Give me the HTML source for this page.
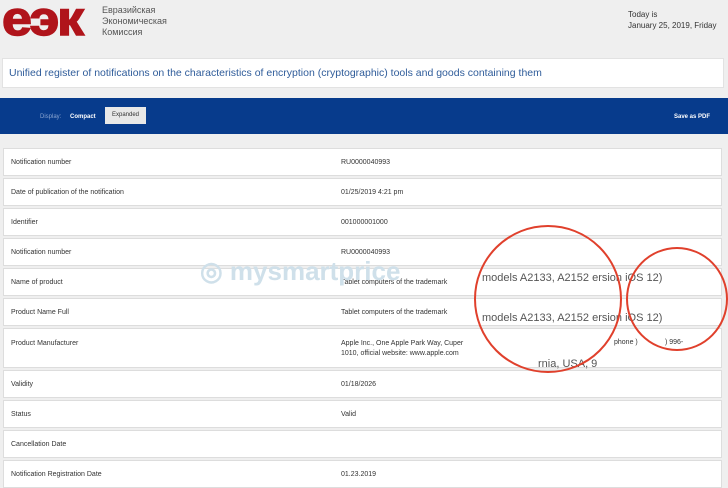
<!DOCTYPE html>
<html><head><meta charset="utf-8"><style>
body{margin:0;width:728px;height:480px;overflow:hidden;background:#efefef;font-family:"Liberation Sans",sans-serif;position:relative}
.logo{position:absolute;left:2px;top:-8px;font-size:48px;font-weight:900;color:#b0141b;letter-spacing:-2px;transform:scaleX(1.12);transform-origin:left top;-webkit-text-stroke:1.5px #b0141b}
.org{position:absolute;left:102px;top:5px;font-size:9px;line-height:11px;color:#555}
.today{position:absolute;left:628px;top:9px;font-size:8px;line-height:11px;color:#333}
.title{position:absolute;left:2px;top:58px;width:722px;height:30px;background:#fff;border:1px solid #e2e2e2;box-sizing:border-box;color:#2f5c9a;font-size:10.5px;line-height:29px;padding-left:6px}
.bar{position:absolute;left:0;top:98px;width:728px;height:36px;background:#073b8c}
.bar span{position:absolute;font-size:6px;color:#fff;font-weight:bold}
.row{position:absolute;left:3px;width:719px;background:#fff;border:1px solid #ddd;box-sizing:border-box;font-size:7px;color:#333}
.row .l{position:absolute;left:7px}.row .v{position:absolute;left:337px;line-height:10px}
.circ{position:absolute;border:2px solid #e0402c;border-radius:50%}
.big{position:absolute;font-size:11px;color:#555;font-weight:normal}
</style></head><body>
<div class="logo">eэк</div>
<div class="org">Евразийская<br>Экономическая<br>Комиссия</div>
<div class="today">Today is<br>January 25, 2019, Friday</div>
<div class="title">Unified register of notifications on the characteristics of encryption (cryptographic) tools and goods containing them</div>
<div class="bar"><span style="left:40px;top:16px;color:#8aa4d0;font-weight:normal">Display:</span><span style="left:70px;top:16px">Compact</span>
<div style="position:absolute;left:105px;top:9px;width:41px;height:17px;background:#e8e8e8;font-size:6px;color:#333;line-height:17px;text-align:center">Expanded</div>
<span style="left:674px;top:16px">Save as PDF</span></div>

<div class="row" style="top:148px;height:28px"><span class="l" style="top:10px">Notification number</span><span class="v" style="top:9px">RU0000040993</span></div>
<div class="row" style="top:178px;height:28px"><span class="l" style="top:10px">Date of publication of the notification</span><span class="v" style="top:9px">01/25/2019 4:21 pm</span></div>
<div class="row" style="top:208px;height:28px"><span class="l" style="top:10px">Identifier</span><span class="v" style="top:9px">001000001000</span></div>
<div class="row" style="top:238px;height:28px"><span class="l" style="top:10px">Notification number</span><span class="v" style="top:9px">RU0000040993</span></div>
<div class="row" style="top:268px;height:28px"><span class="l" style="top:10px">Name of product</span><span class="v" style="top:9px">Tablet computers of the trademark</span></div>
<div class="row" style="top:298px;height:28px"><span class="l" style="top:10px">Product Name Full</span><span class="v" style="top:9px">Tablet computers of the trademark</span></div>
<div class="row" style="top:328px;height:40px"><span class="l" style="top:11px">Product Manufacturer</span><span class="v" style="top:10px">Apple Inc., One Apple Park Way, Cuper<br>1010, official website: www.apple.com</span><span style="position:absolute;left:610px;top:10px">phone )&nbsp;&nbsp;&nbsp;&nbsp;&nbsp;&nbsp;&nbsp;&nbsp;&nbsp;&nbsp;&nbsp;&nbsp;&nbsp;&nbsp;) 996-</span></div>
<div class="row" style="top:370px;height:28px"><span class="l" style="top:10px">Validity</span><span class="v" style="top:9px">01/18/2026</span></div>
<div class="row" style="top:400px;height:28px"><span class="l" style="top:10px">Status</span><span class="v" style="top:9px">Valid</span></div>
<div class="row" style="top:430px;height:28px"><span class="l" style="top:10px">Cancellation Date</span></div>
<div class="row" style="top:460px;height:28px"><span class="l" style="top:10px">Notification Registration Date</span><span class="v" style="top:9px">01.23.2019</span></div>

<div style="position:absolute;left:200px;top:256px;font-size:26px;color:#cfe0ea;font-weight:bold">◎ mysmartprice</div>
<div class="big" style="left:482px;top:272px">models A2133, A2152 ersion iOS 12)</div>
<div class="big" style="left:482px;top:312px">models A2133, A2152 ersion iOS 12)</div>
<div class="big" style="left:538px;top:358px">rnia, USA, 9</div>
<div class="circ" style="left:474px;top:225px;width:144px;height:144px"></div>
<div class="circ" style="left:626px;top:247px;width:98px;height:100px"></div>
</body></html>
